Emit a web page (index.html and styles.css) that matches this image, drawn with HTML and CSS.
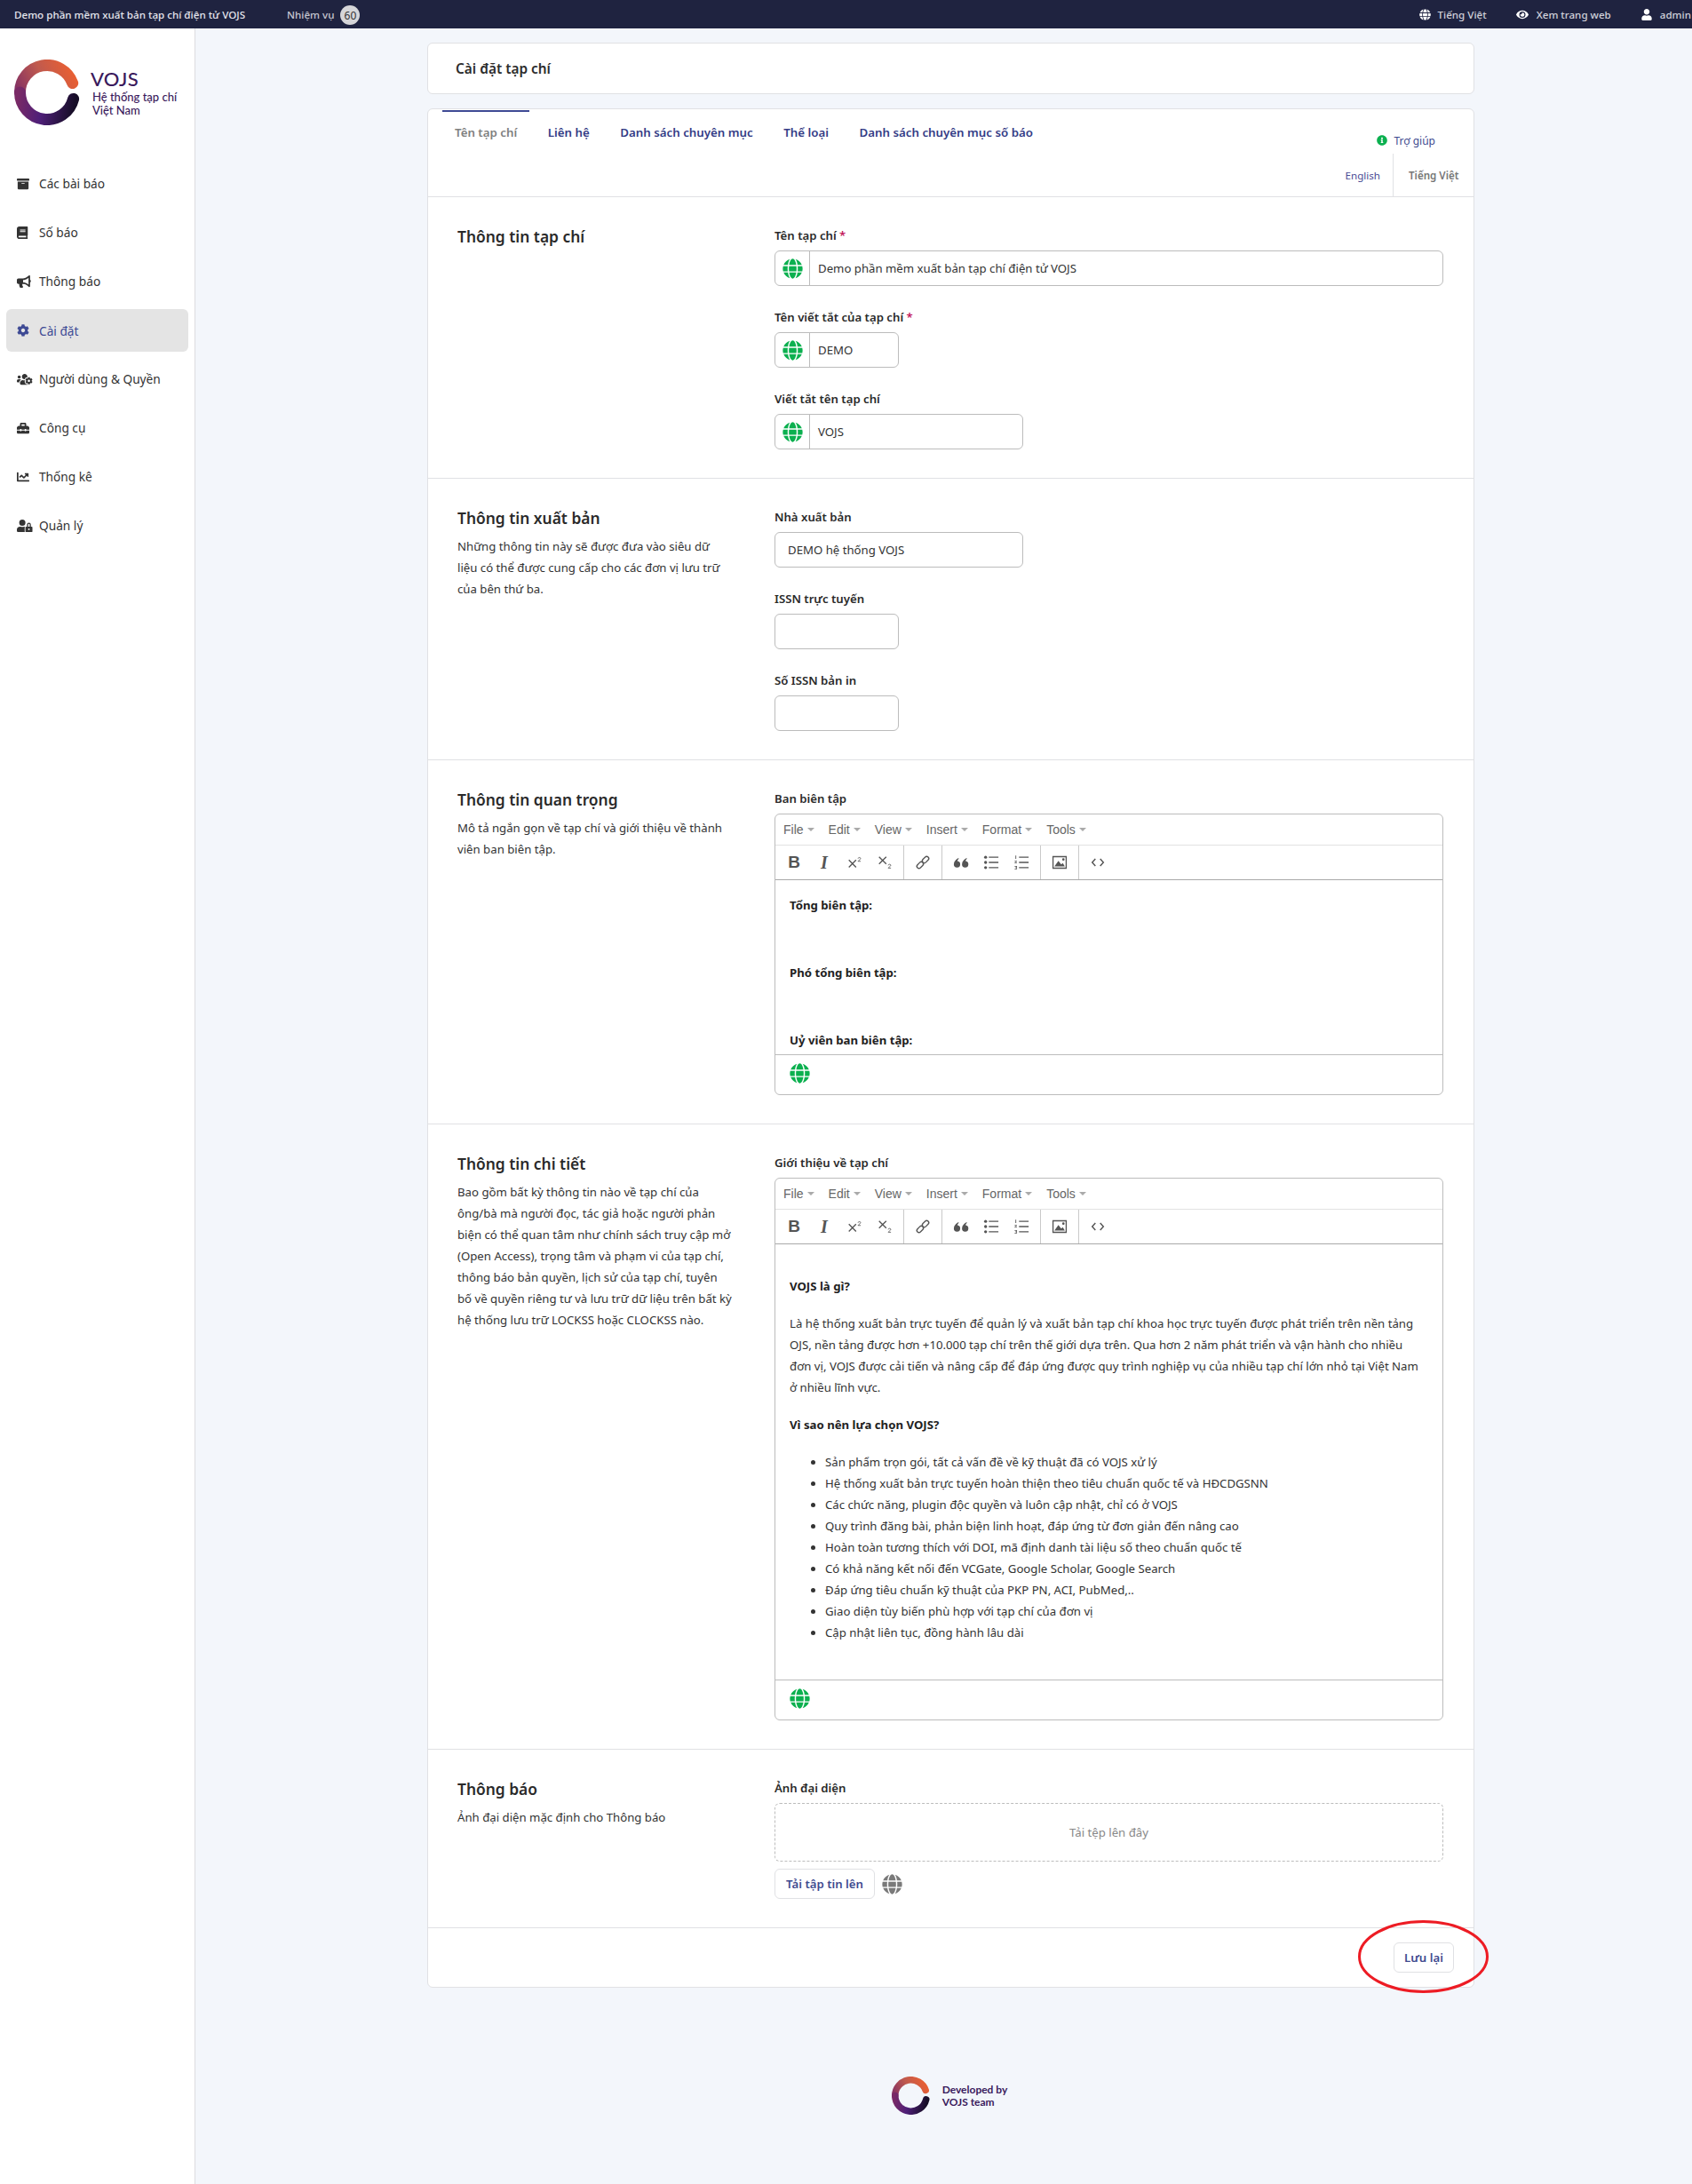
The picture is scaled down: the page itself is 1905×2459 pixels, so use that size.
FILE: index.html
```html
<!DOCTYPE html>
<html lang="vi">
<head>
<meta charset="utf-8">
<title>Cài đặt tạp chí</title>
<link rel="stylesheet" href="styles.css">
</head>
<body>
<svg class="defs" width="0" height="0" aria-hidden="true">
  <defs>
    <linearGradient id="ringTop" gradientUnits="userSpaceOnUse" x1="66" y1="14" x2="4" y2="48">
      <stop offset="0" stop-color="#e85f33"/><stop offset="0.45" stop-color="#c05a4e"/><stop offset="1" stop-color="#7a2a66"/>
    </linearGradient>
    <linearGradient id="ringBottom" gradientUnits="userSpaceOnUse" x1="4" y1="40" x2="68" y2="52">
      <stop offset="0" stop-color="#7a2a66"/><stop offset="0.45" stop-color="#4e1f78"/><stop offset="1" stop-color="#160d26"/>
    </linearGradient>
    <symbol id="ring" viewBox="0 0 74 74">
      <path d="M65.7 26.6A30.5 30.5 0 0 0 6.5 37" fill="none" stroke="url(#ringTop)" stroke-width="13" stroke-linecap="round"/>
      <path d="M6.5 37A30.5 30.5 0 0 0 66.6 44.4" fill="none" stroke="url(#ringBottom)" stroke-width="13" stroke-linecap="round"/>
    </symbol>
    <symbol id="i-globe" viewBox="0 0 496 512"><path d="M336.5 160C322 70.7 287.8 8 248 8s-74 62.7-88.5 152h177zM152 256c0 22.2 1.2 43.5 3.3 64h185.3c2.1-20.5 3.3-41.8 3.3-64s-1.2-43.5-3.3-64H155.3c-2.1 20.5-3.3 41.8-3.3 64zm324.7-96c-28.6-67.9-86.5-120.4-158-141.6 24.4 33.8 41.2 84.7 50 141.6h108zM177.2 18.4C105.8 39.6 47.8 92.1 19.3 160h108c8.7-56.9 25.5-107.8 49.9-141.6zM487.4 192H372.7c2.1 21 3.3 42.5 3.3 64s-1.2 43-3.3 64h114.6c5.5-20.5 8.6-41.8 8.6-64s-3.1-43.5-8.5-64zM120 256c0-21.5 1.2-43 3.3-64H8.6C3.2 212.5 0 233.8 0 256s3.2 43.5 8.6 64h114.6c-2-21-3.2-42.5-3.2-64zm39.5 96c14.5 89.3 48.7 152 88.5 152s74-62.7 88.5-152h-177zm159.3 141.6c71.4-21.2 129.4-73.7 158-141.6h-108c-8.8 56.9-25.6 107.8-50 141.6zM19.3 352c28.6 67.9 86.5 120.4 158 141.6-24.4-33.8-41.2-84.7-50-141.6h-108z"/></symbol>
    <symbol id="i-archive" viewBox="0 0 512 512" preserveAspectRatio="xMinYMid"><path d="M32 448c0 17.7 14.3 32 32 32h384c17.7 0 32-14.3 32-32V160H32v288zm160-212c0-6.6 5.4-12 12-12h104c6.6 0 12 5.4 12 12v8c0 6.6-5.4 12-12 12H204c-6.6 0-12-5.4-12-12v-8zM480 32H32C14.3 32 0 46.3 0 64v48c0 8.8 7.2 16 16 16h480c8.8 0 16-7.2 16-16V64c0-17.7-14.3-32-32-32z"/></symbol>
    <symbol id="i-book" viewBox="0 0 448 512" preserveAspectRatio="xMinYMid"><path d="M448 360V24c0-13.3-10.7-24-24-24H96C43 0 0 43 0 96v320c0 53 43 96 96 96h328c13.3 0 24-10.7 24-24v-16c0-7.5-3.5-14.3-8.9-18.7-4.2-15.4-4.2-59.3 0-74.7 5.4-4.3 8.9-11.1 8.9-18.6zM128 134c0-3.3 2.7-6 6-6h212c3.3 0 6 2.7 6 6v20c0 3.3-2.7 6-6 6H134c-3.3 0-6-2.7-6-6v-20zm0 64c0-3.3 2.7-6 6-6h212c3.3 0 6 2.7 6 6v20c0 3.3-2.7 6-6 6H134c-3.3 0-6-2.7-6-6v-20zm253.4 250H96c-17.7 0-32-14.3-32-32 0-17.6 14.4-32 32-32h285.4c-1.9 17.1-1.9 46.9 0 64z"/></symbol>
    <symbol id="i-bullhorn" viewBox="0 0 576 512" preserveAspectRatio="xMinYMid"><path d="M576 240c0-23.63-12.95-44.04-32-55.12V32.01C544 23.26 537.02 0 512 0c-7.12 0-14.19 2.38-19.98 7.02l-85.03 68.03C364.28 109.19 310.66 128 256 128H64c-35.35 0-64 28.65-64 64v96c0 35.35 28.65 64 64 64h33.7c-1.39 10.48-2.18 21.14-2.18 32 0 39.77 9.26 77.35 25.56 110.94 5.19 10.69 16.52 17.06 28.4 17.06h74.28c26.05 0 41.69-29.84 25.9-50.56-16.4-21.52-26.15-48.36-26.15-77.44 0-11.11 1.62-21.79 4.41-32H256c54.66 0 108.28 18.81 150.98 52.95l85.03 68.03a32.023 32.023 0 0 0 19.98 7.02c24.92 0 32-22.78 32-32V295.13C563.05 284.04 576 263.63 576 240zm-96 141.42l-33.05-26.44C392.95 311.78 325.12 288 256 288v-96c69.12 0 136.95-23.78 190.95-66.98L480 98.58v282.84z"/></symbol>
    <symbol id="i-cog" viewBox="0 0 512 512" preserveAspectRatio="xMinYMid"><path d="M487.4 315.7l-42.6-24.6c4.3-23.2 4.3-47 0-70.2l42.6-24.6c4.9-2.8 7.1-8.6 5.5-14-11.1-35.6-30-67.8-54.7-94.6-3.8-4.1-10-5.1-14.8-2.3L380.8 110c-17.9-15.4-38.5-27.3-60.8-35.1V25.8c0-5.6-3.9-10.5-9.4-11.7-36.7-8.2-74.3-7.8-109.2 0-5.5 1.2-9.4 6.1-9.4 11.7V75c-22.2 7.9-42.8 19.8-60.8 35.1L88.7 85.5c-4.9-2.8-11-1.9-14.8 2.3-24.7 26.7-43.6 58.9-54.7 94.6-1.7 5.4.6 11.2 5.5 14L67.3 221c-4.3 23.2-4.3 47 0 70.2l-42.6 24.6c-4.9 2.8-7.1 8.6-5.5 14 11.1 35.6 30 67.8 54.7 94.6 3.8 4.1 10 5.1 14.8 2.3l42.6-24.6c17.9 15.4 38.5 27.3 60.8 35.1v49.2c0 5.6 3.9 10.5 9.4 11.7 36.7 8.2 74.3 7.8 109.2 0 5.5-1.2 9.4-6.1 9.4-11.7v-49.2c22.2-7.9 42.8-19.8 60.8-35.1l42.6 24.6c4.9 2.8 11 1.9 14.8-2.3 24.7-26.7 43.6-58.9 54.7-94.6 1.5-5.5-.7-11.3-5.6-14.1zM256 336c-44.1 0-80-35.9-80-80s35.9-80 80-80 80 35.9 80 80-35.9 80-80 80z"/></symbol>
    <symbol id="i-users-cog" viewBox="0 0 640 512" preserveAspectRatio="xMinYMid"><path d="M610.5 341.3c2.6-14.1 2.6-28.5 0-42.6l25.8-14.9c3-1.7 4.3-5.2 3.3-8.5-6.7-21.6-18.2-41.2-33.2-57.4-2.3-2.5-6-3.1-9-1.4l-25.8 14.9c-10.9-9.3-23.4-16.5-36.9-21.3v-29.8c0-3.4-2.4-6.4-5.7-7.1-22.3-5-45-4.8-66.2 0-3.3.7-5.7 3.7-5.7 7.1v29.8c-13.5 4.8-26 12-36.9 21.3l-25.8-14.9c-2.9-1.7-6.7-1.1-9 1.4-15 16.2-26.5 35.8-33.2 57.4-1 3.3.4 6.8 3.3 8.5l25.8 14.9c-2.6 14.1-2.6 28.5 0 42.6l-25.8 14.9c-3 1.7-4.3 5.2-3.3 8.5 6.7 21.6 18.2 41.1 33.2 57.4 2.3 2.5 6 3.1 9 1.4l25.8-14.9c10.9 9.3 23.4 16.5 36.9 21.3v29.8c0 3.4 2.4 6.4 5.7 7.1 22.3 5 45 4.8 66.2 0 3.3-.7 5.7-3.7 5.7-7.1v-29.8c13.5-4.8 26-12 36.9-21.3l25.8 14.9c2.9 1.7 6.7 1.1 9-1.4 15-16.2 26.5-35.8 33.2-57.4 1-3.3-.4-6.8-3.3-8.5l-25.8-14.9zM496 368.5c-26.8 0-48.5-21.8-48.5-48.5s21.8-48.5 48.5-48.5 48.5 21.8 48.5 48.5-21.7 48.5-48.5 48.5zM96 224c35.3 0 64-28.7 64-64s-28.7-64-64-64-64 28.7-64 64 28.7 64 64 64zm224 32c1.9 0 3.7-.5 5.6-.6 8.3-21.7 20.5-42.1 36.3-59.2 7.4-8 17.9-12.6 28.9-12.6 6.9 0 13.7 1.8 19.6 5.3l7.9 4.6c.8-.5 1.6-.9 2.4-1.4 7-14.6 11.2-30.8 11.2-48 0-61.9-50.1-112-112-112S208 82.1 208 144c0 61.9 50.1 112 112 112zm105.2 194.5c-2.3-1.2-4.6-2.6-6.8-3.9-8.2 4.8-15.3 9.8-27.5 9.8-10.9 0-21.4-4.6-28.9-12.6-18.3-19.8-32.3-43.9-40.2-69.6-10.7-34.5 24.9-49.7 25.8-50.3-.1-2.6-.1-5.2 0-7.8l-7.9-4.6c-3.8-2.2-7-5-9.8-8.1-3.3.2-6.5.6-9.8.6-24.6 0-47.6-6-68.5-16h-8.3C179.6 288 128 339.6 128 403.2V432c0 26.5 21.5 48 48 48h255.4c-3.7-6-6.2-12.8-6.2-20.3v-9.2zM173.1 274.6C161.5 263.1 145.6 256 128 256H64c-35.3 0-64 28.7-64 64v32c0 17.7 14.3 32 32 32h65.9c6.3-47.4 34.9-87.3 75.2-109.4z"/></symbol>
    <symbol id="i-toolbox" viewBox="0 0 512 512" preserveAspectRatio="xMinYMid"><path d="M502.63 214.63l-45.25-45.25c-6-6-14.14-9.37-22.63-9.37H384V80c0-26.51-21.49-48-48-48H176c-26.51 0-48 21.49-48 48v80H77.25c-8.49 0-16.62 3.37-22.63 9.37L9.37 214.63c-6 6-9.37 14.14-9.37 22.63V320h128v-16c0-8.84 7.16-16 16-16h32c8.84 0 16 7.16 16 16v16h128v-16c0-8.84 7.16-16 16-16h32c8.84 0 16 7.16 16 16v16h128v-82.75c0-8.48-3.37-16.62-9.37-22.62zM320 160H192V96h128v64zm64 208c0 8.84-7.16 16-16 16h-32c-8.84 0-16-7.16-16-16v-16H192v16c0 8.84-7.16 16-16 16h-32c-8.84 0-16-7.16-16-16v-16H0v96c0 17.67 14.33 32 32 32h448c17.67 0 32-14.33 32-32v-96H384v16z"/></symbol>
    <symbol id="i-chart" viewBox="0 0 512 512" preserveAspectRatio="xMinYMid"><path d="M496 384H64V80c0-8.84-7.16-16-16-16H16C7.16 64 0 71.16 0 80v336c0 17.67 14.33 32 32 32h464c8.84 0 16-7.16 16-16v-32c0-8.84-7.16-16-16-16zM464 96H345.94c-21.38 0-32.09 25.85-16.97 40.97l32.4 32.4L288 242.75l-73.37-73.37c-12.5-12.5-32.76-12.5-45.25 0l-68.69 68.69c-6.25 6.25-6.25 16.38 0 22.63l22.62 22.62c6.25 6.25 16.38 6.25 22.63 0L192 237.25l73.37 73.37c12.5 12.5 32.76 12.5 45.25 0l96-96 32.4 32.4c15.12 15.12 40.97 4.41 40.97-16.97V112c.01-8.84-7.15-16-15.99-16z"/></symbol>
    <symbol id="i-user-lock" viewBox="0 0 640 512" preserveAspectRatio="xMinYMid"><path d="M224 256A128 128 0 1 0 96 128a128 128 0 0 0 128 128zm96 64a63.08 63.08 0 0 1 8.1-30.5c-4.8-.5-9.5-1.5-14.5-1.5h-16.7a174.08 174.08 0 0 1-145.8 0h-16.7A134.43 134.43 0 0 0 0 422.4V464a48 48 0 0 0 48 48h280.9a63.54 63.54 0 0 1-8.9-32zm288-32h-32v-80a80 80 0 0 0-160 0v80h-32a32 32 0 0 0-32 32v160a32 32 0 0 0 32 32h224a32 32 0 0 0 32-32V320a32 32 0 0 0-32-32zM496 432a32 32 0 1 1 32-32 32 32 0 0 1-32 32zm32-144h-64v-80a32 32 0 0 1 64 0z"/></symbol>
    <symbol id="i-eye" viewBox="0 0 576 512"><path d="M572.52 241.4C518.29 135.59 410.93 64 288 64S57.68 135.64 3.48 241.41a32.35 32.35 0 0 0 0 29.19C57.71 376.41 165.07 448 288 448s230.32-71.64 284.52-177.41a32.35 32.35 0 0 0 0-29.19zM288 400a144 144 0 1 1 144-144 143.93 143.93 0 0 1-144 144zm0-240a95.31 95.31 0 0 0-25.31 3.79 47.85 47.85 0 0 1-66.9 66.9A95.78 95.78 0 1 0 288 160z"/></symbol>
    <symbol id="i-user" viewBox="0 0 448 512"><path d="M224 256c70.7 0 128-57.3 128-128S294.7 0 224 0 96 57.3 96 128s57.3 128 128 128zm89.6 32h-16.7c-22.2 10.2-46.9 16-72.9 16s-50.6-5.8-72.9-16h-16.7C60.2 288 0 348.2 0 422.4V464c0 26.5 21.5 48 48 48h352c26.5 0 48-21.5 48-48v-41.6c0-74.2-60.2-134.4-134.4-134.4z"/></symbol>
    <symbol id="i-info" viewBox="0 0 512 512"><path d="M256 8C119 8 8 119.1 8 256c0 137 111 248 248 248s248-111 248-248C504 119.1 393 8 256 8zm0 110c23.2 0 42 18.8 42 42s-18.8 42-42 42-42-18.8-42-42 18.8-42 42-42zm56 254c0 6.6-5.4 12-12 12h-88c-6.6 0-12-5.4-12-12v-24c0-6.6 5.4-12 12-12h12v-64h-12c-6.6 0-12-5.4-12-12v-24c0-6.6 5.4-12 12-12h64c6.6 0 12 5.4 12 12v100h12c6.6 0 12 5.4 12 12v24z"/></symbol>
    <symbol id="t-sup" viewBox="0 0 20 20"><path d="M3 7l9 9M12 7l-9 9" fill="none" stroke="currentColor" stroke-width="1.5"/><path d="M14.5 5.2c.2-1.8 3.2-1.8 3.2-.1 0 1.3-2.6 2-3.2 3.5h3.4" fill="none" stroke="currentColor" stroke-width=".9"/></symbol>
    <symbol id="t-sub" viewBox="0 0 20 20"><path d="M3 3l9 9M12 3l-9 9" fill="none" stroke="currentColor" stroke-width="1.5"/><path d="M14.5 13.7c.2-1.8 3.2-1.8 3.2-.1 0 1.3-2.6 2-3.2 3.5h3.4" fill="none" stroke="currentColor" stroke-width=".9"/></symbol>
    <symbol id="t-link" viewBox="0 0 20 20"><g fill="none" stroke="currentColor" stroke-width="1.5"><rect x="-4.6" y="-2.6" width="9.2" height="5.2" rx="2.6" transform="translate(6.6 13.4) rotate(-45)"/><rect x="-4.6" y="-2.6" width="9.2" height="5.2" rx="2.6" transform="translate(13.4 6.6) rotate(-45)"/></g></symbol>
    <symbol id="t-quote" viewBox="0 0 20 20"><path d="M6.800 4.500C3.800 6.200 1 8.800 1 12.400a4 4 0 1 0 4.600-4c0-1.100.6-2.100 1.600-2.800zM17 4.500c-3 1.700-5.800 4.300-5.800 7.900a4 4 0 1 0 4.600-4c0-1.100.6-2.100 1.600-2.800z"/></symbol>
    <symbol id="t-ul" viewBox="0 0 20 20"><circle cx="3" cy="3.500" r="1.900"/><circle cx="3" cy="10" r="1.900"/><circle cx="3" cy="16.500" r="1.900"/><path d="M7 2.700h12v1.600H7zM7 9.200h12v1.600H7zM7 15.700h12v1.600H7z"/></symbol>
    <symbol id="t-ol" viewBox="0 0 20 20"><path d="M7 2.700h12v1.600H7zM7 9.200h12v1.600H7zM7 15.700h12v1.600H7z"/><path d="M2.500 1.500h1v4h-1zM1.500 8h3v.7l-2 1.500h2v.8h-3v-.7l2-1.500h-2zM1.500 14.500h3v4h-3v-.7h2.200v-.9H2.300v-.7h1.400v-.9H1.500z"/></symbol>
    <symbol id="t-img" viewBox="0 0 20 20"><path fill-rule="evenodd" d="M1 2h18v16H1zM2.500 3.500v13h15v-13z"/><path d="M3.500 15l5-7 3.500 4.500 2-1.700 2.500 4.200z"/><circle cx="14.700" cy="6.300" r="1.500"/></symbol>
    <symbol id="t-code" viewBox="0 0 20 20"><path d="M7 5.500L3 10l4 4.500M13 5.500l4 4.500-4 4.500" fill="none" stroke="currentColor" stroke-width="1.600"/></symbol>
  </defs>
</svg>

<header class="topbar">
  <div class="topbar-left">
    <span class="site-name">Demo phần mềm xuất bản tạp chí điện tử VOJS</span>
    <span class="tasks">Nhiệm vụ</span>
    <span class="badge">60</span>
  </div>
  <div class="topbar-right">
    <span class="top-link top-lang"><svg class="top-icon"><use href="#i-globe"/></svg>Tiếng Việt</span>
    <span class="top-link top-view"><svg class="top-icon top-eye"><use href="#i-eye"/></svg>Xem trang web</span>
    <span class="top-link"><svg class="top-icon top-user"><use href="#i-user"/></svg>admin</span>
  </div>
</header>

<div class="layout">
  <aside class="sidebar">
    <div class="brand">
      <svg class="brand-ring"><use href="#ring"/></svg>
      <div class="brand-text">
        <div class="brand-name">VOJS</div>
        <div class="brand-sub">Hệ thống tạp chí<br>Việt Nam</div>
      </div>
    </div>
    <nav class="nav">
      <a class="nav-item"><svg class="nav-icon"><use href="#i-archive"/></svg>Các bài báo</a>
      <a class="nav-item"><svg class="nav-icon"><use href="#i-book"/></svg>Số báo</a>
      <a class="nav-item"><svg class="nav-icon"><use href="#i-bullhorn"/></svg>Thông báo</a>
      <a class="nav-item nav-active"><svg class="nav-icon"><use href="#i-cog"/></svg>Cài đặt</a>
      <a class="nav-item"><svg class="nav-icon"><use href="#i-users-cog"/></svg>Người dùng &amp; Quyền</a>
      <a class="nav-item"><svg class="nav-icon"><use href="#i-toolbox"/></svg>Công cụ</a>
      <a class="nav-item"><svg class="nav-icon"><use href="#i-chart"/></svg>Thống kê</a>
      <a class="nav-item"><svg class="nav-icon"><use href="#i-user-lock"/></svg>Quản lý</a>
    </nav>
  </aside>

  <main class="main">
    <div class="card page-head">Cài đặt tạp chí</div>

    <div class="card">
      <div class="tabbar">
        <div class="tabs">
          <a class="tab tab-active">Tên tạp chí</a>
          <a class="tab">Liên hệ</a>
          <a class="tab">Danh sách chuyên mục</a>
          <a class="tab">Thể loại</a>
          <a class="tab">Danh sách chuyên mục số báo</a>
        </div>
        <div class="tab-side">
          <a class="help"><svg class="help-icon"><use href="#i-info"/></svg>Trợ giúp</a>
          <div class="langs">
            <a class="lang">English</a>
            <a class="lang lang-active">Tiếng Việt</a>
          </div>
        </div>
      </div>

      <section class="section">
        <div class="sec-info"><h2 class="sec-title">Thông tin tạp chí</h2></div>
        <div class="sec-body">
          <div class="field">
            <div class="label">Tên tạp chí <span class="req">*</span></div>
            <div class="input has-addon"><span class="addon"><svg class="globe"><use href="#i-globe"/></svg></span><span class="value">Demo phần mềm xuất bản tạp chí điện tử VOJS</span></div>
          </div>
          <div class="field">
            <div class="label">Tên viết tắt của tạp chí <span class="req">*</span></div>
            <div class="input has-addon w-140"><span class="addon"><svg class="globe"><use href="#i-globe"/></svg></span><span class="value">DEMO</span></div>
          </div>
          <div class="field">
            <div class="label">Viết tắt tên tạp chí</div>
            <div class="input has-addon w-280"><span class="addon"><svg class="globe"><use href="#i-globe"/></svg></span><span class="value">VOJS</span></div>
          </div>
        </div>
      </section>

      <section class="section">
        <div class="sec-info">
          <h2 class="sec-title">Thông tin xuất bản</h2>
          <p class="sec-desc">Những thông tin này sẽ được đưa vào siêu dữ<br>liệu có thể được cung cấp cho các đơn vị lưu trữ<br>của bên thứ ba.</p>
        </div>
        <div class="sec-body">
          <div class="field">
            <div class="label">Nhà xuất bản</div>
            <div class="input w-280"><span class="value value-plain">DEMO hệ thống VOJS</span></div>
          </div>
          <div class="field">
            <div class="label">ISSN trực tuyến</div>
            <div class="input w-140"></div>
          </div>
          <div class="field">
            <div class="label">Số ISSN bản in</div>
            <div class="input w-140"></div>
          </div>
        </div>
      </section>

      <section class="section">
        <div class="sec-info">
          <h2 class="sec-title">Thông tin quan trọng</h2>
          <p class="sec-desc">Mô tả ngắn gọn về tạp chí và giới thiệu về thành viên ban biên tập.</p>
        </div>
        <div class="sec-body">
          <div class="field">
            <div class="label">Ban biên tập</div>
            <div class="editor">
              <div class="menubar">
                <span class="menu">File<i class="caret"></i></span><span class="menu">Edit<i class="caret"></i></span><span class="menu">View<i class="caret"></i></span><span class="menu">Insert<i class="caret"></i></span><span class="menu">Format<i class="caret"></i></span><span class="menu">Tools<i class="caret"></i></span>
              </div>
              <div class="toolbar">
                <div class="tgroup"><span class="tbtn tb-b">B</span><span class="tbtn tb-i">I</span><span class="tbtn"><svg class="ticon"><use href="#t-sup"/></svg></span><span class="tbtn"><svg class="ticon"><use href="#t-sub"/></svg></span></div>
                <div class="tgroup"><span class="tbtn"><svg class="ticon"><use href="#t-link"/></svg></span></div>
                <div class="tgroup"><span class="tbtn"><svg class="ticon"><use href="#t-quote"/></svg></span><span class="tbtn"><svg class="ticon"><use href="#t-ul"/></svg></span><span class="tbtn"><svg class="ticon"><use href="#t-ol"/></svg></span></div>
                <div class="tgroup"><span class="tbtn"><svg class="ticon"><use href="#t-img"/></svg></span></div>
                <div class="tgroup tgroup-last"><span class="tbtn"><svg class="ticon"><use href="#t-code"/></svg></span></div>
              </div>
              <div class="ed-body ed-short">
                <p class="ed-strong">Tổng biên tập:</p>
                <p class="ed-strong">Phó tổng biên tập:</p>
                <p class="ed-strong">Uỷ viên ban biên tập:</p>
              </div>
              <div class="statusbar"><svg class="globe"><use href="#i-globe"/></svg></div>
            </div>
          </div>
        </div>
      </section>

      <section class="section">
        <div class="sec-info">
          <h2 class="sec-title">Thông tin chi tiết</h2>
          <p class="sec-desc">Bao gồm bất kỳ thông tin nào về tạp chí của ông/bà mà người đọc, tác giả hoặc người phản biện có thể quan tâm như chính sách truy cập mở (Open Access), trọng tâm và phạm vi của tạp chí, thông báo bản quyền, lịch sử của tạp chí, tuyên bố về quyền riêng tư và lưu trữ dữ liệu trên bất kỳ hệ thống lưu trữ LOCKSS hoặc CLOCKSS nào.</p>
        </div>
        <div class="sec-body">
          <div class="field">
            <div class="label">Giới thiệu về tạp chí</div>
            <div class="editor">
              <div class="menubar">
                <span class="menu">File<i class="caret"></i></span><span class="menu">Edit<i class="caret"></i></span><span class="menu">View<i class="caret"></i></span><span class="menu">Insert<i class="caret"></i></span><span class="menu">Format<i class="caret"></i></span><span class="menu">Tools<i class="caret"></i></span>
              </div>
              <div class="toolbar">
                <div class="tgroup"><span class="tbtn tb-b">B</span><span class="tbtn tb-i">I</span><span class="tbtn"><svg class="ticon"><use href="#t-sup"/></svg></span><span class="tbtn"><svg class="ticon"><use href="#t-sub"/></svg></span></div>
                <div class="tgroup"><span class="tbtn"><svg class="ticon"><use href="#t-link"/></svg></span></div>
                <div class="tgroup"><span class="tbtn"><svg class="ticon"><use href="#t-quote"/></svg></span><span class="tbtn"><svg class="ticon"><use href="#t-ul"/></svg></span><span class="tbtn"><svg class="ticon"><use href="#t-ol"/></svg></span></div>
                <div class="tgroup"><span class="tbtn"><svg class="ticon"><use href="#t-img"/></svg></span></div>
                <div class="tgroup tgroup-last"><span class="tbtn"><svg class="ticon"><use href="#t-code"/></svg></span></div>
              </div>
              <div class="ed-body ed-long">
                <p class="ed-strong">VOJS là gì?</p>
                <p>Là hệ thống xuất bản trực tuyến để quản lý và xuất bản tạp chí khoa học trực tuyến được phát triển trên nền tảng OJS, nền tảng được hơn +10.000 tạp chí trên thế giới dựa trên. Qua hơn 2 năm phát triển và vận hành cho nhiều<br>đơn vị, VOJS được cải tiến và nâng cấp để đáp ứng được quy trình nghiệp vụ của nhiều tạp chí lớn nhỏ tại Việt Nam<br>ở nhiều lĩnh vực.</p>
                <p class="ed-strong">Vì sao nên lựa chọn VOJS?</p>
                <ul class="ed-list">
                  <li>Sản phẩm trọn gói, tất cả vấn đề về kỹ thuật đã có VOJS xử lý</li>
                  <li>Hệ thống xuất bản trực tuyến hoàn thiện theo tiêu chuẩn quốc tế và HĐCDGSNN</li>
                  <li>Các chức năng, plugin độc quyền và luôn cập nhật, chỉ có ở VOJS</li>
                  <li>Quy trình đăng bài, phản biện linh hoạt, đáp ứng từ đơn giản đến nâng cao</li>
                  <li>Hoàn toàn tương thích với DOI, mã định danh tài liệu số theo chuẩn quốc tế</li>
                  <li>Có khả năng kết nối đến VCGate, Google Scholar, Google Search</li>
                  <li>Đáp ứng tiêu chuẩn kỹ thuật của PKP PN, ACI, PubMed,..</li>
                  <li>Giao diện tùy biến phù hợp với tạp chí của đơn vị</li>
                  <li>Cập nhật liên tục, đồng hành lâu dài</li>
                </ul>
              </div>
              <div class="statusbar"><svg class="globe"><use href="#i-globe"/></svg></div>
            </div>
          </div>
        </div>
      </section>

      <section class="section">
        <div class="sec-info">
          <h2 class="sec-title">Thông báo</h2>
          <p class="sec-desc">Ảnh đại diện mặc định cho Thông báo</p>
        </div>
        <div class="sec-body">
          <div class="field">
            <div class="label">Ảnh đại diện</div>
            <div class="dropzone">Tải tệp lên đây</div>
            <div class="upload-row">
              <a class="btn btn-upload">Tải tập tin lên</a>
              <svg class="globe globe-grey"><use href="#i-globe"/></svg>
            </div>
          </div>
        </div>
      </section>

      <div class="card-foot"><a class="btn btn-save">Lưu lại</a></div>
    </div>

    <div class="credit">
      <svg class="credit-ring"><use href="#ring"/></svg>
      <div class="credit-text">Developed by<br>VOJS team</div>
    </div>
  </main>
</div>

<svg class="annotation" viewBox="0 0 147 82"><ellipse cx="73.500" cy="41" rx="72" ry="39.500" fill="none" stroke="#ed1c24" stroke-width="3"/></svg>
</body>
</html>
```

FILE: styles.css
```css
* { box-sizing: border-box; }
html, body { margin: 0; padding: 0; }
body {
  position: relative;
  min-height: 2459px;
  background: #f3f6fb;
  color: #2d2d2d;
  font-family: "Noto Sans", "Open Sans", sans-serif;
  font-size: 13.2px;
}
.defs { position: absolute; }
a { text-decoration: none; }

.topbar {
  height: 32px;
  background: #1f2340;
  display: flex;
  justify-content: space-between;
  align-items: center;
  white-space: nowrap;
}
.topbar-left { display: flex; align-items: center; padding-left: 16px; }
.site-name { color: #e6e6ee; font-size: 11.6px; font-weight: 500; width: 307px; }
.tasks { color: #c6c7d2; font-size: 11.6px; font-weight: 500; }
.badge {
  width: 22px; height: 22px; margin-left: 7px; margin-top: 2px;
  border-radius: 50%;
  background: #d6d6d8; color: #333;
  font-size: 12px;
  display: flex; align-items: center; justify-content: center;
}
.topbar-right { display: flex; align-items: center; margin-right: 1px; }
.top-link { display: flex; align-items: center; color: #d0d1da; font-size: 11.6px; font-weight: 500; }
.top-icon { width: 13px; height: 13px; fill: #fff; margin-right: 8px; }
.top-eye { width: 14px; margin-right: 9px; }
.top-user { width: 12px; margin-right: 9px; }
.top-lang { margin-right: 33px; }
.top-view { margin-right: 34px; }

.layout { display: flex; align-items: stretch; min-height: 2427px; }

.sidebar { width: 220px; flex: none; background: #fff; border-right: 1px solid #dcdcdf; }
.brand { height: 151px; display: flex; padding: 35px 0 0 16px; }
.brand-ring { width: 74px; height: 74px; flex: none; }
.brand-text { color: #3a1a5c; margin-left: 12px; padding-top: 10px; font-family: "Lato", "Noto Sans", sans-serif; }
.brand-name { font-size: 22px; line-height: 24px; font-weight: 500; letter-spacing: .3px; }
.brand-sub { font-size: 13px; line-height: 14.5px; margin: 1px 0 0 2px; font-weight: 500; }

.nav { display: flex; flex-direction: column; gap: 7px; padding: 0 7px; }
.nav-item {
  height: 47px; margin-bottom: 1px; padding-left: 12px;
  display: flex; align-items: center;
  color: #333; font-size: 13.7px; border-radius: 6px;
}
.nav-icon { width: 18px; height: 14px; margin-right: 7px; flex: none; fill: #333; }
.nav-active { background: #e4e4e4; color: #3e4a94; height: 48px; margin-bottom: 0; }
.nav-active .nav-icon { fill: #3e4a94; }

.main { flex: 1; min-width: 0; padding: 16px 245px 0 261px; }
.card { background: #fff; border: 1px solid #e0e1e4; border-radius: 6px; }
.page-head {
  height: 58px; margin-bottom: 16px;
  padding-left: 31px;
  display: flex; align-items: center;
  font-size: 15.4px; font-weight: 600; color: #2d2d2d;
}

.tabbar { height: 98px; display: flex; justify-content: space-between; }
.tabs { display: flex; gap: 6.5px; padding-left: 16px; padding-top: 1px; align-items: flex-start; }
.tab {
  border-top: 2px solid transparent;
  padding: 13px 14px 0;
  line-height: 20px;
  font-size: 13.3px; font-weight: 600;
  color: #343c86;
}
.tab-active { border-top-color: #3e4a94; color: #808080; }
.tab-side { display: flex; flex-direction: column; align-items: flex-end; padding-top: 25px; }
.help { display: flex; align-items: center; height: 20px; margin-right: 43px; color: #3f4b8f; font-size: 12px; }
.help-icon { width: 12px; height: 12px; fill: #0bb04f; margin-right: 7px; }
.langs { display: flex; margin-top: 5px; height: 48px; }
.lang { display: flex; align-items: center; padding: 0 14px; font-size: 11.6px; color: #4a4a94; }
.lang-active { width: 91px; padding: 0 0 0 17px; border-left: 1px solid #e0e1e4; color: #777; font-weight: 600; }

.section { display: flex; padding: 32px 34px 32px 33px; border-top: 1px solid #e0e1e4; }
.sec-info { width: 357px; flex: none; padding-right: 46px; margin-top: -2px; }
.sec-title { margin: 0 0 6px; font-size: 17.4px; line-height: 28px; font-weight: 600; color: #2a2a2a; white-space: nowrap; }
.sec-desc { margin: 0; font-size: 13.2px; line-height: 24px; color: #333; }
.sec-body { flex: 1; min-width: 0; }

.field { margin-bottom: 24px; }
.field:last-child { margin-bottom: 0; }
.label { height: 20px; line-height: 23px; margin-bottom: 8px; font-size: 13.2px; font-weight: 600; color: #2a2a2a; }
.req { color: #c2185b; }

.input { height: 40px; border: 1px solid #bcbcbc; border-radius: 6px; background: #fff; display: flex; align-items: center; }
.w-140 { width: 140px; }
.w-280 { width: 280px; }
.addon { width: 39px; height: 100%; flex: none; border-right: 1px solid #bcbcbc; display: flex; align-items: center; justify-content: center; }
.value { padding-left: 9px; font-size: 13.2px; color: #333; }
.value-plain { padding-left: 14px; }
.globe { width: 23px; height: 23px; fill: #0bb04f; display: block; }
.globe-grey { fill: #7a7a7a; }

.editor { border: 1px solid #bcbcbc; border-radius: 6px; background: #fff; overflow: hidden; }
.menubar {
  height: 35px; padding-left: 9px;
  display: flex; align-items: center; gap: 16px;
  border-bottom: 1px solid #e2e2e2;
  font-family: "Liberation Sans", Arial, sans-serif; font-size: 14px; color: #666;
}
.menu { display: flex; align-items: center; }
.caret { width: 0; height: 0; margin-left: 4px; border: 4px solid transparent; border-top: 4px solid #aaa; border-bottom: 0; }
.toolbar { height: 39px; display: flex; border-bottom: 1px solid #a9a9a9; }
.tgroup { display: flex; padding: 0 4px; border-right: 1px solid #c9c9c9; }
.tgroup-last { border-right: 0; }
.tbtn { width: 34px; display: flex; align-items: center; justify-content: center; color: #555; fill: #555; }
.tb-b { font-family: "Liberation Sans", Arial, sans-serif; font-weight: 700; font-size: 19px; }
.tb-i { font-family: "Liberation Serif", serif; font-style: italic; font-weight: 700; font-size: 20px; }
.ticon { width: 18px; height: 18px; }

.ed-body { overflow: hidden; padding: 0 16px; font-size: 13.2px; line-height: 24px; color: #333; }
.ed-body p { margin: 0 0 18px; }
.ed-strong { font-weight: 700; color: #222; }
.ed-short { height: 196px; padding-top: 16px; }
.ed-short p { margin-bottom: 52px; }
.ed-long { height: 490px; padding-top: 35px; }
.ed-list { margin: 0; padding-left: 40px; }
.statusbar { height: 45px; border-top: 1px solid #bcbcbc; display: flex; align-items: center; padding: 0 0 3px 16px; }

.dropzone {
  height: 66px; border: 1px dashed #bcbcbc; border-radius: 6px;
  display: flex; align-items: center; justify-content: center;
  color: #888; font-size: 13.2px;
}
.upload-row { display: flex; align-items: center; gap: 8px; margin-top: 8px; }
.btn {
  height: 34px; border: 1px solid #e0e1e4; border-radius: 6px; background: #fff;
  display: flex; align-items: center; justify-content: center;
  font-size: 13.2px; font-weight: 600; color: #3f4b8f;
}
.btn-upload { width: 113px; }
.btn-save { width: 68px; }
.card-foot { display: flex; justify-content: flex-end; padding: 16px 22px 16px 0; border-top: 1px solid #e0e1e4; }

.credit { display: flex; align-items: center; justify-content: center; margin-top: 100px; padding-right: 3px; }
.credit-ring { width: 43px; height: 43px; flex: none; }
.credit-text { margin-left: 14px; font-family: "Lato", "Noto Sans", sans-serif; font-weight: 700; font-size: 12px; line-height: 14px; color: #3a1a5c; }

.annotation { position: absolute; left: 1529px; top: 2162px; width: 147px; height: 82px; }
```
